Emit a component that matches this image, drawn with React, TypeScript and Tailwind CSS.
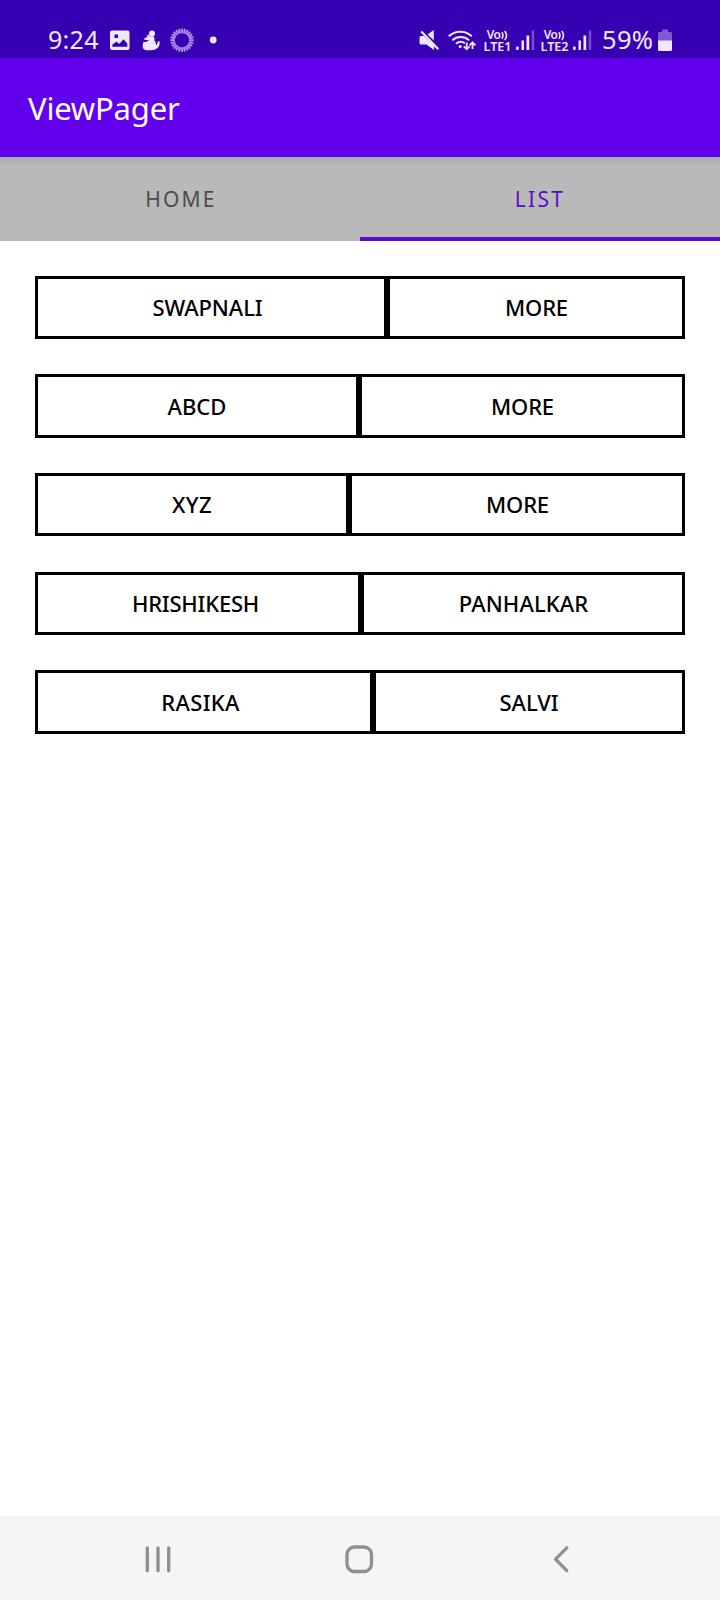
const rows = [
  { left: "SWAPNALI", right: "MORE", row: "mt-[35px] h-[63px]", cell: "w-[352px] pr-[7px] tracking-[-0.1px]", end: "pl-[1px] tracking-[-0.2px]" },
  { left: "ABCD", right: "MORE", row: "mt-[35px] h-[64px]", cell: "w-[324px]", end: "pl-[1px] tracking-[-0.2px]" },
  { left: "XYZ", right: "MORE", row: "mt-[35px] h-[63px]", cell: "w-[314px] tracking-[0.4px]", end: "pl-[1px] tracking-[-0.2px]" },
  { left: "HRISHIKESH", right: "PANHALKAR", row: "mt-[36px] h-[63px]", cell: "w-[326px] pr-[5px] tracking-[-0.2px]", end: "pl-[1px] tracking-[0.1px]" },
  { left: "RASIKA", right: "SALVI", row: "mt-[35px] h-[64px]", cell: "w-[338px] pr-[7px] tracking-[0.3px]", end: "" },
];

function StatusIconsLeft() {
  const ticks = Array.from({ length: 24 }, (_, i) => i * 15);
  return (
    <svg className="ml-[12px] h-[58px] w-[116px]" viewBox="110 0 116 58" fill="#efe8ff">
      <path
        fillRule="evenodd"
        d="M112 30.500h15.500a2 2 0 0 1 2 2v15.500a2 2 0 0 1-2 2h-15.500a2 2 0 0 1-2-2v-15.500a2 2 0 0 1 2-2zM114.500 34.500v3.600h3.500v-3.600zM112.300 46.800h15v-3.300l-3.800-4.300-4.300 4.800-2.600-2.600-4.300 3.300z"
      />
      <circle cx="152" cy="33.600" r="3" />
      <path d="M149.800 36.300h3.700c1 1.200 1.200 2.700.8 4.300 1.300 1.200 1.800 2.700 1.700 4.400 1.300-.6 1.800-1.500 1.500-3.300l1.900-.6c1 4-1 7.300-4.600 8.700l-3.800.4h-5c-2.700-.6-3.600-2.400-3.400-4.400l.8-3.800h2.600l3.300-1.700-3.600-.3-2.300-1.100 4.500-2.300-1.500-.5 2.300-1.500z" />
      <g stroke="#b197ea" strokeWidth="1.700">
        {ticks.map((a) => (
          <line key={a} x1="182" y1="28.400" x2="182" y2="33.200" transform={`rotate(${a} 182 40.200)`} />
        ))}
      </g>
      <circle cx="182" cy="40.200" r="9.200" fill="none" stroke="#a78be4" strokeWidth="3" opacity=".4" />
      <circle cx="213.200" cy="40" r="3.400" />
    </svg>
  );
}

function Signal() {
  return (
    <svg className="h-[58px] w-[19px]" viewBox="0 0 19 58" fill="#efe8ff">
      <rect x="0" y="46.500" width="2.700" height="3.500" rx="1" />
      <rect x="5.500" y="40.500" width="2.500" height="9.500" />
      <rect x="10.500" y="35.500" width="2.700" height="14.500" />
      <rect x="15.700" y="30.500" width="2.500" height="19.500" fill="#7450cf" />
    </svg>
  );
}

function Volte({ n }: { n: string }) {
  return (
    <div className="flex h-[58px] w-[27px] flex-col items-center pt-[29px] font-semibold text-[#efe8ff]">
      <span className="flex h-[12px] items-center whitespace-nowrap text-[12px] leading-[12px] tracking-[-0.5px]">
        Vo
        <svg className="ml-[1px] h-[11px] w-[7px]" viewBox="0 0 7 11" fill="none" stroke="#efe8ff" strokeWidth="1.600">
          <path d="M.8 2.300q2.400 3.200 0 6.400M3.700 1q3.600 4.500 0 9" />
        </svg>
      </span>
      <span className="h-[11px] whitespace-nowrap text-[12.500px] leading-[11px]">LTE{n}</span>
    </div>
  );
}

function StatusBar() {
  return (
    <header className="flex h-[58px] bg-[#3700b3] text-[25px] leading-[78px] text-[#efe8ff]">
      <span className="ml-[48px] w-[50px] whitespace-nowrap tracking-[0.3px]">9:24</span>
      <StatusIconsLeft />
      <div className="ml-auto flex">
        <svg className="h-[58px] w-[60px]" viewBox="417 0 60 58" fill="#efe8ff">
          <path d="M421 36h3l10 9.800v4.200l-7.500-5.500h-5.500q-1.500 0-1.500-1.500v-5.500q0-1.500 1.500-1.500zM427.500 34.500l6.300-4.500v10.500z" />
          <path d="M421.300 31.500l17 17.800" stroke="#efe8ff" strokeWidth="2.200" />
          <g fill="none" stroke="#efe8ff" strokeWidth="2">
            <path d="M448.800 36.300c6.500-6 16.500-6 23 0M452.300 40.300c4.800-4.300 12-4.300 16.700 0M456 43.800c2.700-2.300 6-2.500 8.800-.6" />
            <path d="M466.700 42.500v6M472.500 49v-6" strokeWidth="1.800" />
            <path d="M463.800 46.300l2.900 3 2.900-3M469.600 45.300l2.900-3 2.900 3" strokeWidth="1.800" />
          </g>
          <circle cx="460.200" cy="46.400" r="1.500" />
        </svg>
        <div className="ml-[7px]"><Volte n="1" /></div>
        <div className="ml-[5px]"><Signal /></div>
        <div className="ml-[6px]"><Volte n="2" /></div>
        <div className="ml-[5px]"><Signal /></div>
        <span className="ml-[10px] w-[56px] whitespace-nowrap text-[25.500px] tracking-[0.3px]">59%</span>
        <svg className="mr-[47px] h-[58px] w-[15px]" viewBox="0 0 15 58">
          <path d="M4 29.500h6v2.500h2.500q1.500 0 1.500 1.500V41H0v-7.500Q0 32 1.500 32H4z" fill="#7f5bd3" />
          <path d="M0 40.500h14V49.500q0 1.500-1.500 1.500h-11Q0 51 0 49.500z" fill="#efe8ff" />
        </svg>
      </div>
    </header>
  );
}

export default function App() {
  return (
    <div className="flex h-[1600px] w-[720px] flex-col overflow-hidden bg-white font-['Noto_Sans',sans-serif]">
      <StatusBar />
      <div className="flex h-[99px] items-center bg-[#6200ee] pl-[28px] text-[31px] leading-[40px] tracking-[-0.2px] text-white">
        <h1 className="pt-px">ViewPager</h1>
      </div>
      <nav className="flex h-[84px] bg-[linear-gradient(#aaaaaa,#b9b9b9_8px)] text-[21px] tracking-[2px]">
        <button className="w-[360px] pt-[2px] pl-[2px] tracking-[2.200px] text-[#4c4c4c]">HOME</button>
        <button className="w-[360px] border-b-4 border-[#5b0cc9] pt-[6px] tracking-[2.300px] text-[#5b0cc9]">LIST</button>
      </nav>
      <main className="flex-1 px-[35px]">
        {rows.map((r) => (
          <div key={r.left} className={`flex text-[22px] font-medium text-black ${r.row}`}>
            <div className={`flex items-center justify-center border-[3px] border-black ${r.cell}`}>{r.left}</div>
            <div className={`flex flex-1 items-center justify-center border-[3px] border-black ${r.end}`}>{r.right}</div>
          </div>
        ))}
      </main>
      <footer className="h-[84px] bg-[#f5f5f5]">
        <svg className="h-[84px] w-[720px]" viewBox="0 1516 720 84" fill="none" stroke="#8f8f8f" strokeWidth="3.300" strokeLinecap="round" strokeLinejoin="round">
          <path d="M147.300 1547.800v23M158 1547.800v23M168.700 1547.800v23" />
          <rect x="347" y="1547" width="24.500" height="24.500" rx="7.500" />
          <path d="M566.800 1547.800l-11.300 11.400 11.300 11.400" />
        </svg>
      </footer>
    </div>
  );
}
